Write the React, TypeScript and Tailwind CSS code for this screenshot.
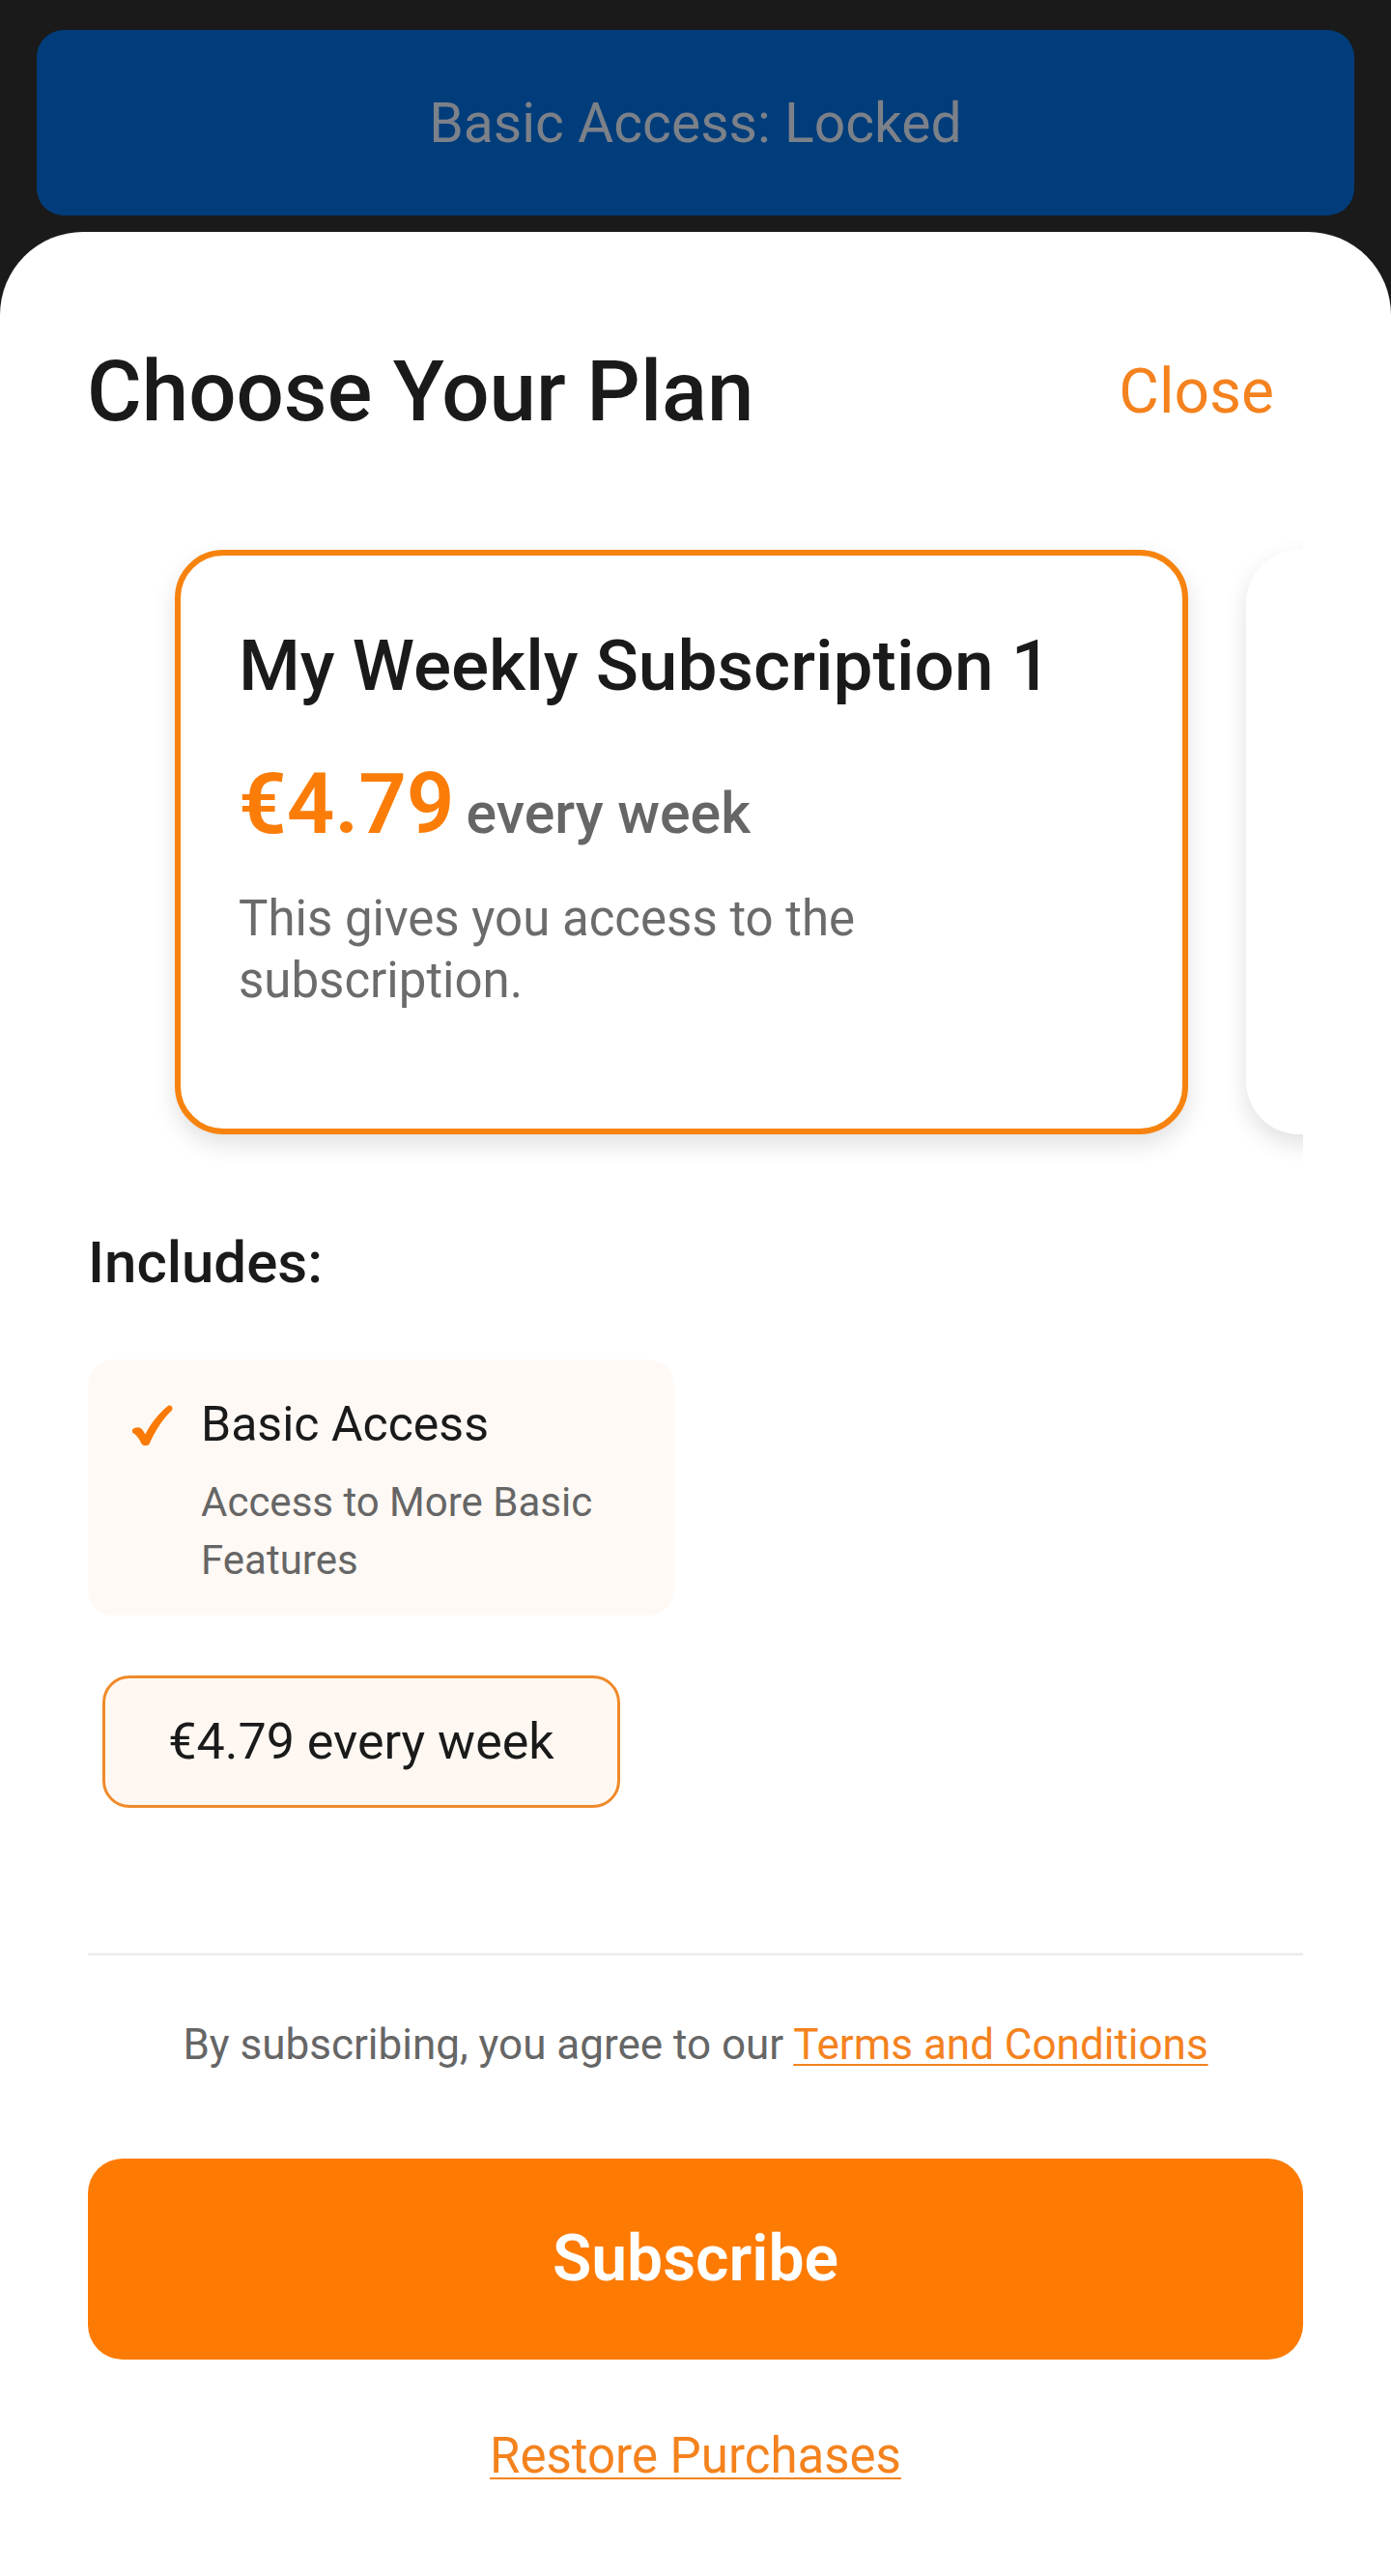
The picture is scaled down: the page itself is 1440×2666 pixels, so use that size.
import React from "react";

function BrushCheck() {
  return (
    <svg
      viewBox="0 0 42 42"
      className="w-[42px] h-[42px] flex-none mt-[5px]"
      aria-hidden="true"
    >
      <path
        d="M0 25.5 C4 22.5 8.5 22.5 11 26.5 L13.5 30.5 C19 19 27 9 37.5 0.5 C40.5 0 42.5 2.5 41 5.5 C31.5 14.5 24 26 17.5 40.5 C16 42.8 11 42.8 9.5 40.3 C7.5 35.5 4.5 31 0 28.5 Z"
        fill="#f97a07"
      />
    </svg>
  );
}

export default function App() {
  const font = { fontFamily: "Roboto, 'Noto Sans', sans-serif" };
  return (
    <div
      className="min-h-[2666px] w-full bg-[#1a1a1a] flex flex-col"
      style={font}
    >
      {/* Top locked banner */}
      <div className="pt-[31px] px-[38px] pb-[17px]">
        <div className="h-[192px] rounded-[28px] bg-[#013d7b] flex items-center justify-center">
          <span className="text-[57px] leading-none text-[#7c8189]">
            Basic Access: Locked
          </span>
        </div>
      </div>

      {/* Bottom sheet */}
      <div className="flex-1 bg-white rounded-t-[86px] flex flex-col">
        {/* Header */}
        <div className="flex items-center justify-between pt-[122px] pl-[90px] pr-[121px]">
          <h1 className="text-[87px] leading-none font-medium text-[#1a1a1a]">
            Choose Your Plan
          </h1>
          <button className="text-[64px] leading-none text-[#f4821e]">
            Close
          </button>
        </div>

        {/* Plan carousel */}
        <div className="mt-[90px] mx-[91px] overflow-hidden py-[30px]">
          <div className="flex gap-[60px] pl-[90px]">
            <div className="flex-none w-[1049px] h-[605px] box-border rounded-[50px] border-[6px] border-[#f7830f] bg-white shadow-[0_10px_24px_rgba(0,0,0,0.12)] px-[60px] pt-[78px]">
              <div className="text-[73px] leading-none font-medium text-[#1a1a1a]">
                My Weekly Subscription 1
              </div>
              <div className="mt-[63px] flex items-baseline">
                <span className="text-[87px] leading-none font-semibold text-[#fb7d08]">
                  €4.79
                </span>
                <span className="ml-[12px] text-[59px] leading-none font-medium text-[#666666]">
                  every week
                </span>
              </div>
              <p className="mt-[43px] text-[51px] leading-[64px] text-[#6b6b6b]">
                This gives you access to the subscription.
              </p>
            </div>
            <div className="flex-none w-[1049px] h-[605px] rounded-[55px] bg-white shadow-[0_10px_24px_rgba(0,0,0,0.12)]" />
          </div>
        </div>

        {/* Includes */}
        <div className="mt-[73px] px-[91px]">
          <div className="text-[60px] leading-none font-medium text-[#1a1a1a]">
            Includes:
          </div>
          <div className="mt-[70px] w-[607px] rounded-[27px] bg-[#fff9f5] pt-[42px] pb-[27px] pl-[46px] pr-[40px] flex">
            <BrushCheck />
            <div className="ml-[29px] flex flex-col">
              <div className="text-[50px] leading-none text-[#1a1a1a]">
                Basic Access
              </div>
              <div className="mt-[26px] text-[42px] leading-[60px] text-[#666666]">
                Access to More Basic Features
              </div>
            </div>
          </div>

          <div className="mt-[62px] ml-[15px] w-[536px] h-[137px] box-border rounded-[28px] border-[3px] border-[#ef8a2a] bg-[#fff8f2] flex items-center justify-center">
            <span className="text-[52px] leading-none text-[#1a1a1a]">
              €4.79 every week
            </span>
          </div>
        </div>

        {/* Footer */}
        <div className="mt-[150px] mx-[91px] h-[3px] bg-[#eeeeee]" />
        <p className="mt-[70px] text-center text-[44px] leading-none text-[#666666]">
          By subscribing, you agree to our{" "}
          <a className="text-[#f4821e] underline decoration-[2px] underline-offset-[5px]">
            Terms and Conditions
          </a>
        </p>
        <div className="mt-[96px] px-[91px]">
          <button className="w-full h-[208px] rounded-[36px] bg-[#fd7b02] text-white text-[66px] leading-none font-semibold">
            Subscribe
          </button>
        </div>
        <div className="mt-[74px] flex justify-center pb-[60px]">
          <a className="text-[51px] leading-none text-[#f4821e] underline decoration-[2px] underline-offset-[5px]">
            Restore Purchases
          </a>
        </div>
      </div>
    </div>
  );
}
